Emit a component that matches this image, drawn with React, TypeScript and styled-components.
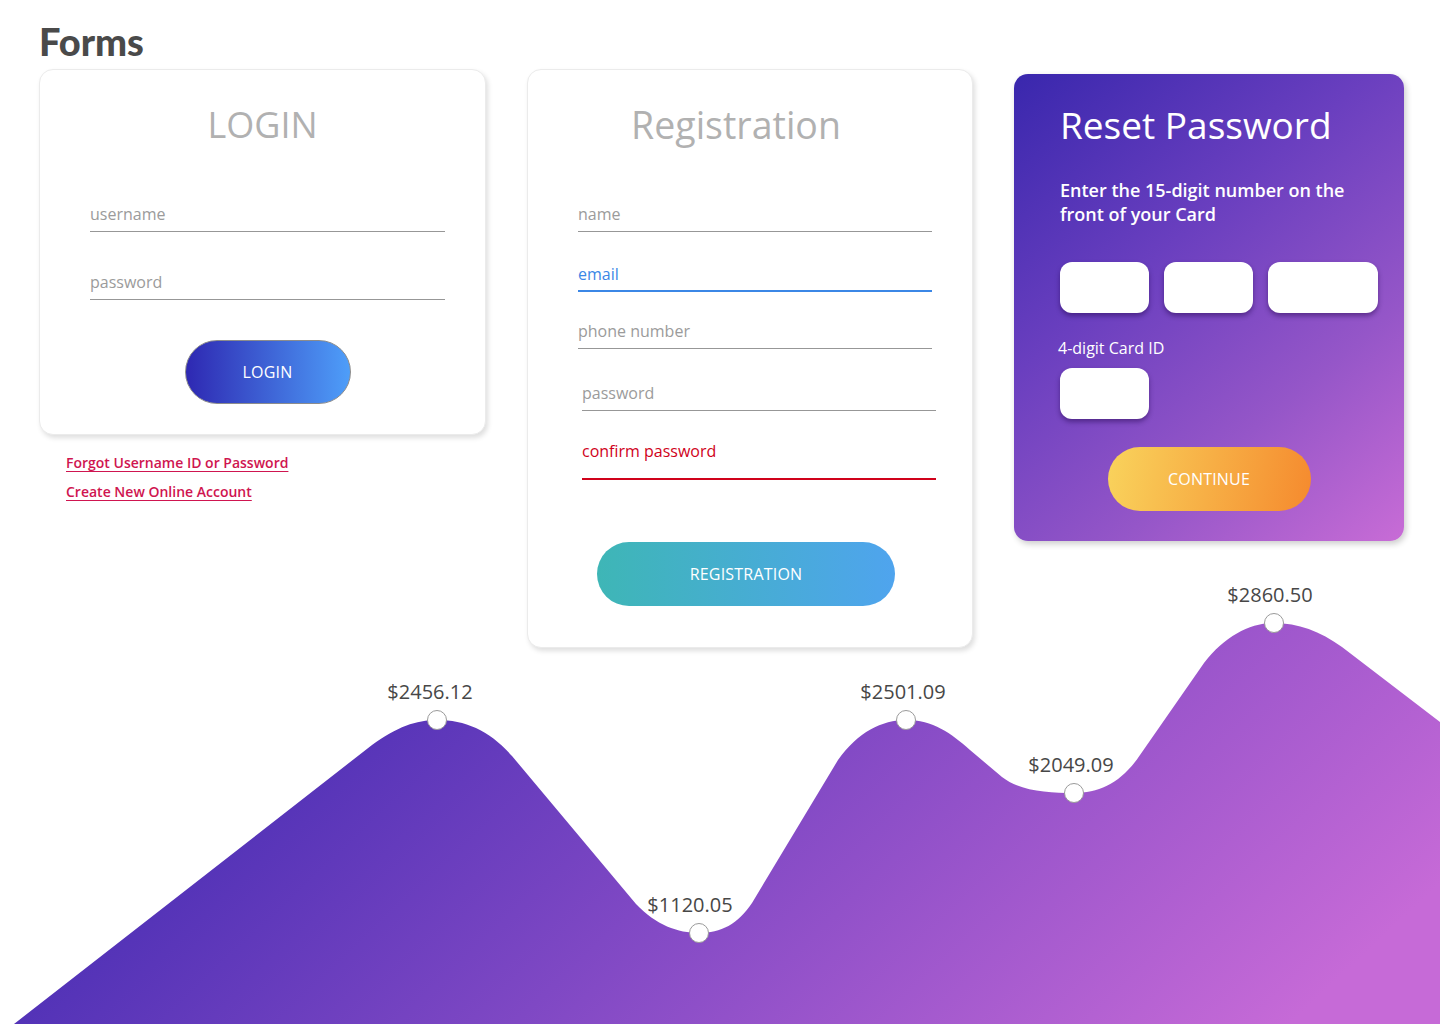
import React from 'react';
import styled, { createGlobalStyle } from 'styled-components';

const GlobalStyle = createGlobalStyle`
  html, body {
    margin: 0;
    padding: 0;
    background: #ffffff;
  }
  body {
    font-family: 'Open Sans', 'Liberation Sans', sans-serif;
    overflow: hidden;
  }
`;

const textGray = '#9b9b9b';
const lineGray = '#979797';
const focusBlue = '#3b87e6';
const errorRed = '#d0021b';

type Tone = 'focus' | 'error' | undefined;
const toneColor = (tone: Tone, base: string) =>
  tone === 'focus' ? focusBlue : tone === 'error' ? errorRed : base;

const Page = styled.div`
  width: 1440px;
  height: 1024px;
  padding: 19px 0 0;
  box-sizing: border-box;
  display: flex;
  flex-direction: column;
  overflow: hidden;
`;

const Title = styled.h1`
  margin: 0 0 6px 39px;
  font-family: Lato, 'Liberation Sans', sans-serif;
  font-weight: 900;
  font-size: 38px;
  line-height: 44px;
  color: #4a4a4a;
`;

const CardRow = styled.div`
  display: flex;
  align-items: flex-start;
  gap: 41px;
  padding-left: 39px;
  position: relative;
  z-index: 1;
`;

const Column = styled.div`
  display: flex;
  flex-direction: column;
`;

const Card = styled.div<{ $w: number }>`
  width: ${(p) => p.$w}px;
  box-sizing: border-box;
  background: #fff;
  border: 1px solid #ebebeb;
  border-radius: 14px;
  box-shadow: 2px 3px 5px rgba(0, 0, 0, 0.13);
  display: flex;
  flex-direction: column;
`;

const CardTitle = styled.h2<{ $shift?: number; $size?: number }>`
  margin: 0;
  font-weight: 400;
  font-size: ${(p) => p.$size || 36}px;
  line-height: 44px;
  color: #b1b1b1;
  text-align: center;
  padding-right: ${(p) => p.$shift || 0}px;
`;

const FormBody = styled.div`
  display: flex;
  flex-direction: column;
  padding: 0 40px 0 50px;
`;

const Field = styled.input<{ $tone?: Tone; $mt: number; $h?: number; $shift?: number }>`
  display: block;
  width: 100%;
  box-sizing: border-box;
  height: ${(p) => p.$h || 35}px;
  padding: 0 0 ${(p) => (p.$h ? p.$h - 35 : 0)}px;
  margin: ${(p) => p.$mt}px 0 0 ${(p) => p.$shift || 0}px;
  border: none;
  border-bottom: ${(p) => (p.$tone ? 2 : 1)}px solid ${(p) => toneColor(p.$tone, lineGray)};
  background: transparent;
  outline: none;
  font-family: 'Open Sans', 'Liberation Sans', sans-serif;
  font-size: 16px;
  color: #4a4a4a;
  &::placeholder {
    color: ${(p) => toneColor(p.$tone, textGray)};
    opacity: 1;
  }
`;

const PillButton = styled.button<{ $w: number; $from: string; $to: string; $border?: boolean; $angle?: number }>`
  width: ${(p) => p.$w}px;
  height: 64px;
  border-radius: 32px;
  border: ${(p) => (p.$border ? '1px solid #8c8c8c' : 'none')};
  background: linear-gradient(${(p) => p.$angle ?? 90}deg, ${(p) => p.$from}, ${(p) => p.$to});
  color: #fff;
  font-family: 'Open Sans', 'Liberation Sans', sans-serif;
  font-weight: 500;
  font-size: 16px;
  letter-spacing: 0.2px;
  cursor: pointer;
  padding: 0;
`;

const ButtonRow = styled.div<{ $mt: number; $shift?: number }>`
  display: flex;
  justify-content: center;
  margin-top: ${(p) => p.$mt}px;
  padding-right: ${(p) => p.$shift || 0}px;
`;

const Links = styled.div`
  display: flex;
  flex-direction: column;
  align-items: flex-start;
  padding: 13px 0 0 27px;
`;

const TextLink = styled.a`
  font-size: 14px;
  font-weight: 600;
  line-height: 29px;
  color: #cf1550;
  text-decoration: underline;
  text-underline-offset: 3px;
`;

const ResetCard = styled.div`
  width: 390px;
  margin-top: 5px;
  box-sizing: border-box;
  padding: 29px 20px 30px 46px;
  border-radius: 14px;
  background: linear-gradient(140deg, #3927ad 0%, #6a3fbf 38%, #9556c8 70%, #c86cd6 100%);
  box-shadow: 2px 3px 6px rgba(0, 0, 0, 0.2);
  color: #fff;
  display: flex;
  flex-direction: column;
`;

const ResetTitle = styled.h2`
  margin: 0;
  font-weight: 400;
  font-size: 37px;
  line-height: 44px;
`;

const Hint = styled.p`
  margin: 31px 0 0;
  font-size: 18px;
  font-weight: 600;
  line-height: 24px;
  width: 320px;
`;

const BoxRow = styled.div<{ $mt: number }>`
  display: flex;
  gap: 15px;
  margin-top: ${(p) => p.$mt}px;
`;

const DigitBox = styled.input<{ $w: number }>`
  width: ${(p) => p.$w}px;
  height: 51px;
  box-sizing: border-box;
  border: none;
  border-radius: 12px;
  background: #fff;
  box-shadow: 0 3px 5px rgba(30, 0, 70, 0.45);
  outline: none;
`;

const SmallLabel = styled.div`
  margin: 24px 0 0 -2px;
  font-size: 16px;
  font-weight: 500;
  line-height: 22px;
`;

const ChartBox = styled.div`
  margin-top: -78px;
  height: 454px;
  position: relative;
  z-index: 0;
`;

type Point = { x: number; y: number; lx: number; label: string };

const points: Point[] = [
  { x: 437, y: 720, lx: 430, label: '$2456.12' },
  { x: 699, y: 933, lx: 690, label: '$1120.05' },
  { x: 906, y: 720, lx: 903, label: '$2501.09' },
  { x: 1074, y: 793, lx: 1071, label: '$2049.09' },
  { x: 1274, y: 623, lx: 1270, label: '$2860.50' },
];

const wavePath = [
  'M 14 1024',
  'L 372 745',
  'C 397 727, 416 720, 437 720',
  'C 466 720, 490 731, 512 756',
  'L 636 904',
  'C 656 925, 678 933, 699 933',
  'C 721 933, 738 924, 752 903',
  'L 838 760',
  'C 858 732, 882 720, 906 720',
  'C 933 720, 951 733, 970 750',
  'L 1002 777',
  'C 1020 791, 1048 793, 1074 793',
  'C 1100 793, 1122 782, 1140 755',
  'L 1204 663',
  'C 1225 636, 1250 623, 1274 623',
  'C 1298 623, 1320 631, 1342 647',
  'L 1440 722',
  'L 1440 1024',
  'Z',
].join(' ');

function WaveChart() {
  return (
    <svg width="1440" height="454" viewBox="0 570 1440 454" style={{ display: 'block' }}>
      <defs>
        <linearGradient id="waveFill" x1="0" y1="0.35" x2="1" y2="0.65">
          <stop offset="0" stopColor="#3b27b0" />
          <stop offset="0.5" stopColor="#7f48c4" />
          <stop offset="1" stopColor="#c66ad7" />
        </linearGradient>
      </defs>
      <path d={wavePath} fill="url(#waveFill)" />
      {points.map((p) => (
        <g key={p.label}>
          <circle cx={p.x} cy={p.y} r="9.5" fill="#fff" stroke="#9a9a9a" strokeWidth="1" />
          <text
            x={p.lx}
            y={p.y - 21}
            textAnchor="middle"
            fontFamily="'Open Sans', 'Liberation Sans', sans-serif"
            fontSize="20"
            fill="#474747"
          >
            {p.label}
          </text>
        </g>
      ))}
    </svg>
  );
}

export default function App() {
  return (
    <>
      <GlobalStyle />
      <Page>
        <Title>Forms</Title>
        <CardRow>
          <Column>
            <Card $w={447} style={{ padding: '33px 0 30px' }}>
              <CardTitle>LOGIN</CardTitle>
              <FormBody>
                <Field $mt={50} placeholder="username" />
                <Field $mt={33} placeholder="password" type="password" />
                <ButtonRow $mt={40}>
                  <PillButton $w={166} $from="#2e28b2" $to="#4e9ef9" $border>
                    LOGIN
                  </PillButton>
                </ButtonRow>
              </FormBody>
            </Card>
            <Links>
              <TextLink href="#">Forgot Username ID or Password</TextLink>
              <TextLink href="#">Create New Online Account</TextLink>
            </Links>
          </Column>
          <Card $w={446} style={{ padding: '33px 0 41px' }}>
            <CardTitle $shift={28} $size={37.5}>
              Registration
            </CardTitle>
            <FormBody>
              <Field $mt={50} placeholder="name" />
              <Field $mt={25} $tone="focus" placeholder="email" />
              <Field $mt={22} placeholder="phone number" />
              <Field $mt={27} $shift={4} placeholder="password" type="password" />
              <Field $mt={23} $h={46} $shift={4} $tone="error" placeholder="confirm password" type="password" />
            </FormBody>
            <ButtonRow $mt={62} $shift={8}>
              <PillButton $w={298} $from="#3eb6b6" $to="#4fa4ee">
                REGISTRATION
              </PillButton>
            </ButtonRow>
          </Card>
          <ResetCard>
            <ResetTitle>Reset Password</ResetTitle>
            <Hint>Enter the 15-digit number on the front of your Card</Hint>
            <BoxRow $mt={36}>
              <DigitBox $w={89} />
              <DigitBox $w={89} />
              <DigitBox $w={110} />
            </BoxRow>
            <SmallLabel>4-digit Card ID</SmallLabel>
            <BoxRow $mt={9}>
              <DigitBox $w={89} />
            </BoxRow>
            <ButtonRow $mt={28} style={{ marginLeft: -26 }}>
              <PillButton $w={203} $from="#f9d35c" $to="#f58a2e" $angle={100}>
                CONTINUE
              </PillButton>
            </ButtonRow>
          </ResetCard>
        </CardRow>
        <ChartBox>
          <WaveChart />
        </ChartBox>
      </Page>
    </>
  );
}
